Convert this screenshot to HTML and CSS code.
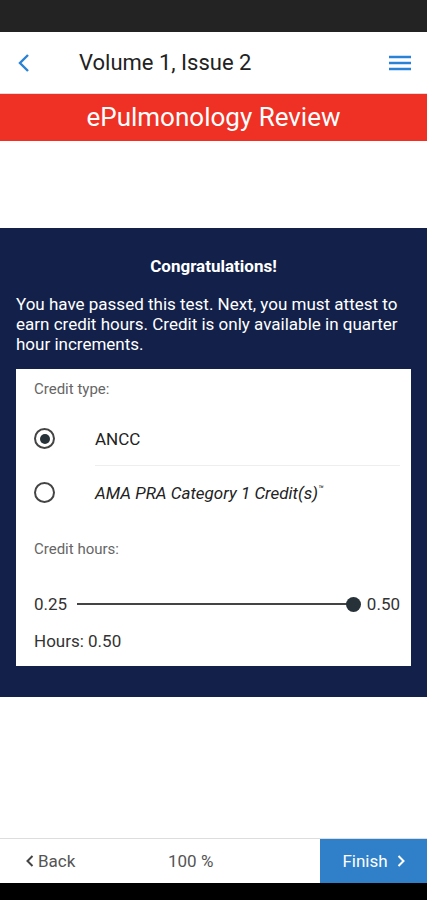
FILE: index.html
```html
<!DOCTYPE html>
<html lang="en">
<head>
  <meta charset="UTF-8" />
  <meta name="viewport" content="width=device-width, initial-scale=1.0"/>
  <title>ePulmonology Review - Volume 1, Issue 2</title>
  <link rel="stylesheet" href="styles.css">
</head>
<body>

  <div class="statusbar"></div>

  <div class="topbar">
    <span class="nav-back">
      <svg width="14" height="20" viewBox="0 0 14 20"><path d="M11 2 L3 10 L11 18" fill="none" stroke="#2a82d6" stroke-width="2.4"/></svg>
    </span>
    <span class="topbar-title">Volume 1, Issue 2</span>
    <span class="nav-menu">
      <svg width="22" height="16" viewBox="0 0 22 16"><path d="M0 2 H22 M0 8 H22 M0 14 H22" stroke="#2a82d6" stroke-width="2.4"/></svg>
    </span>
  </div>

  <div class="brand">ePulmonology Review</div>

  <div class="gap"></div>

  <div class="panel">
    <h3>Congratulations!</h3>
    <p>You have passed this test. Next, you must attest to earn credit hours. Credit is only available in quarter hour increments.</p>

    <div class="card">
      <div class="label">Credit type:</div>
      <div class="option first">
        <span class="radio checked"></span>
        <span class="option-text">ANCC</span>
      </div>
      <div class="option">
        <span class="radio"></span>
        <span class="option-text italic">AMA PRA Category 1 Credit(s)<sup>™</sup></span>
      </div>

      <div class="label hours-label">Credit hours:</div>
      <div class="slider-row">
        <span>0.25</span>
        <div class="track"><span class="thumb"></span></div>
        <span>0.50</span>
      </div>
      <div class="hours">Hours: 0.50</div>
    </div>
  </div>

  <div class="fill"></div>

  <div class="bottombar">
    <span class="back">
      <svg width="8" height="12" viewBox="0 0 8 12"><path d="M6.5 1 L1.5 6 L6.5 11" fill="none" stroke="#444" stroke-width="2"/></svg>
      Back
    </span>
    <span class="progress">100 %</span>
    <span class="finish">
      Finish
      <svg width="8" height="12" viewBox="0 0 8 12"><path d="M1.5 1 L6.5 6 L1.5 11" fill="none" stroke="#fff" stroke-width="2"/></svg>
    </span>
  </div>
  <div class="navbar"></div>

</body>
</html>
```

FILE: styles.css
```css
body {
  font-family: Roboto, "Noto Sans", sans-serif;
  margin: 0;
  height: 900px;
  display: flex;
  flex-direction: column;
  background: #fff;
  color: #222;
}
.statusbar {
  height: 32px;
  background: #232323;
}
.topbar {
  height: 61px;
  display: flex;
  align-items: center;
  border-bottom: 1px solid #ddd;
}
.nav-back {
  width: 79px;
  padding-left: 17px;
  box-sizing: border-box;
  display: flex;
}
.topbar-title {
  flex: 1;
  font-size: 22px;
  font-weight: 400;
  color: #222;
}
.nav-menu {
  padding-right: 16px;
  display: flex;
}
.brand {
  height: 47px;
  background: #ee3124;
  color: #fff;
  font-size: 26px;
  line-height: 47px;
  text-align: center;
}
.gap {
  height: 87px;
}
.panel {
  background: #13214a;
  color: #fff;
  padding: 28px 16px 31px;
}
.panel h3 {
  margin: 0;
  font-size: 17px;
  text-align: center;
}
.panel p {
  margin: 18px 0 15px;
  font-size: 17px;
  line-height: 20px;
}
.card {
  background: #fff;
  color: #222;
  padding: 12px 11px 15px 18px;
}
.label {
  font-size: 15px;
  color: #666;
  line-height: 16px;
}
.option {
  display: flex;
  align-items: center;
  height: 53px;
}
.option.first {
  margin-top: 15px;
}
.option + .option {
  border-top: 1px solid #eee;
  margin-left: 61px;
}
.option + .option .radio {
  margin-left: -61px;
}
.radio {
  width: 21px;
  height: 21px;
  border: 2px solid #444;
  border-radius: 50%;
  margin-right: 40px;
  box-sizing: border-box;
  position: relative;
}
.radio.checked::after {
  content: "";
  position: absolute;
  left: 3.5px;
  top: 3.5px;
  width: 10px;
  height: 10px;
  border-radius: 50%;
  background: #263238;
}
.option-text {
  font-size: 17px;
}
.italic {
  font-style: italic;
}
.italic sup {
  font-size: 9px;
}
.hours-label {
  margin-top: 22px;
}
.slider-row {
  display: flex;
  align-items: center;
  margin-top: 37px;
  font-size: 17px;
  color: #333;
}
.track {
  flex: 1;
  height: 2px;
  background: #444;
  margin: 0 13px 0 10px;
  position: relative;
}
.thumb {
  position: absolute;
  right: -7px;
  top: -6.5px;
  width: 15px;
  height: 15px;
  border-radius: 50%;
  background: #263238;
}
.hours {
  margin-top: 17px;
  font-size: 17px;
  color: #333;
}
.fill {
  flex: 1;
}
.bottombar {
  height: 44px;
  border-top: 1px solid #ddd;
  display: flex;
  align-items: center;
  font-size: 17px;
  color: #555;
}
.back {
  width: 138px;
  padding-left: 26px;
  display: flex;
  align-items: center;
  gap: 4px;
  box-sizing: border-box;
}
.progress {
  flex: 1;
  padding-left: 30px;
}
.finish {
  width: 107px;
  height: 100%;
  background: #2f80c9;
  color: #fff;
  display: flex;
  align-items: center;
  justify-content: center;
  gap: 9px;
}
.navbar {
  height: 17px;
  background: #000;
}
```
